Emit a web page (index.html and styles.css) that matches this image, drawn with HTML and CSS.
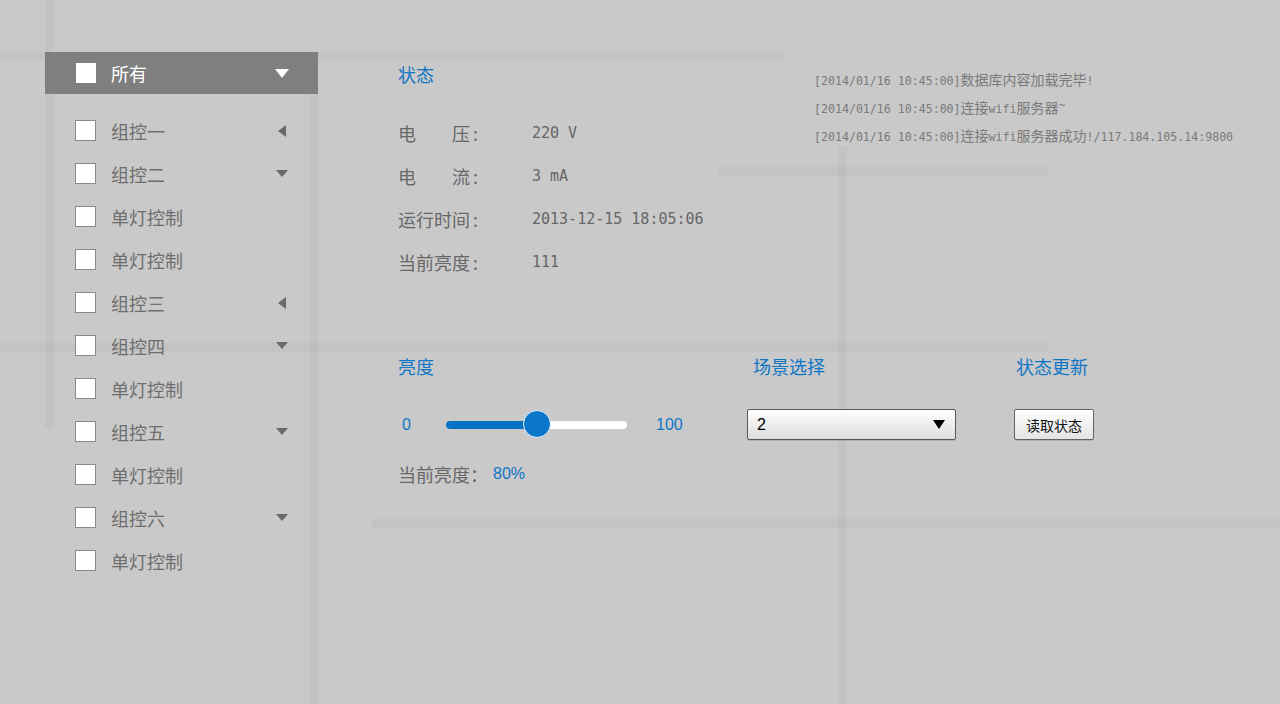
FILE: index.html
```html
<!DOCTYPE html>
<html lang="zh-CN">
<head>
<meta charset="utf-8">
<title>灯光控制</title>
<link rel="stylesheet" href="styles.css">
</head>
<body>
<div class="bg" aria-hidden="true">
  <i class="ln v1"></i>
  <i class="ln h1"></i>
  <i class="ln v2"></i>
  <i class="ln h2"></i>
  <i class="ln v3"></i>
  <i class="ln h3"></i>
  <i class="ln h4"></i>
</div>
<div class="page">
  <aside class="sidebar">
    <div class="side-head">
      <span class="cb-head"></span>
      <span class="label">所有</span>
      <span class="tri-slot"><span class="tri-down tri-white"></span></span>
    </div>
    <ul class="tree">
      <li class="node"><span class="cb"></span><span class="label">组控一</span><span class="tri-slot"><span class="tri-left"></span></span></li>
      <li class="node"><span class="cb"></span><span class="label">组控二</span><span class="tri-slot"><span class="tri-down"></span></span></li>
      <li class="node"><span class="cb"></span><span class="label">单灯控制</span></li>
      <li class="node"><span class="cb"></span><span class="label">单灯控制</span></li>
      <li class="node"><span class="cb"></span><span class="label">组控三</span><span class="tri-slot"><span class="tri-left"></span></span></li>
      <li class="node"><span class="cb"></span><span class="label">组控四</span><span class="tri-slot"><span class="tri-down"></span></span></li>
      <li class="node"><span class="cb"></span><span class="label">单灯控制</span></li>
      <li class="node"><span class="cb"></span><span class="label">组控五</span><span class="tri-slot"><span class="tri-down"></span></span></li>
      <li class="node"><span class="cb"></span><span class="label">单灯控制</span></li>
      <li class="node"><span class="cb"></span><span class="label">组控六</span><span class="tri-slot"><span class="tri-down"></span></span></li>
      <li class="node"><span class="cb"></span><span class="label">单灯控制</span></li>
    </ul>
  </aside>
  <main class="main">
    <div class="top">
      <section class="status">
        <h2 class="title">状态</h2>
        <dl class="kv">
          <div class="kv-row"><dt>电　　压<span class="colon">:</span></dt><dd>220 V</dd></div>
          <div class="kv-row"><dt>电　　流<span class="colon">:</span></dt><dd>3 mA</dd></div>
          <div class="kv-row"><dt>运行时间<span class="colon">:</span></dt><dd>2013-12-15 18:05:06</dd></div>
          <div class="kv-row"><dt>当前亮度<span class="colon">:</span></dt><dd>111</dd></div>
        </dl>
      </section>
      <div class="log">
        <p><span class="m">[2014/01/16 10:45:00]</span>数据库内容加载完毕<span class="m">!</span></p>
        <p><span class="m">[2014/01/16 10:45:00]</span>连接<span class="m">wifi</span>服务器<span class="m tilde">~</span></p>
        <p><span class="m">[2014/01/16 10:45:00]</span>连接<span class="m">wifi</span>服务器成功<span class="m">!/117.184.105.14:9800</span></p>
      </div>
    </div>
    <div class="controls">
      <h2 class="title">亮度</h2>
      <h2 class="title t2">场景选择</h2>
      <h2 class="title t3">状态更新</h2>
      <div class="slider cell">
        <span class="rmin">0</span>
        <div class="track">
          <div class="fill" style="width:50%"></div>
          <span class="thumb" style="left:50%"></span>
        </div>
        <span class="rmax">100</span>
      </div>
      <div class="select cell">
        <span class="sel-val">2</span>
        <span class="sel-arrow"></span>
      </div>
      <div class="cell"><button class="btn" type="button">读取状态</button></div>
      <div class="cur"><span class="cur-label">当前亮度：</span><span class="cur-val">80%</span></div>
    </div>
  </main>
</div>
</body>
</html>
```

FILE: styles.css
```css
* { box-sizing: border-box; }
html, body { margin: 0; padding: 0; }
body {
  width: 1280px;
  height: 704px;
  overflow: hidden;
  position: relative;
  background: #c9c9c9;
  font-family: "Noto Sans CJK SC", "Noto Sans", sans-serif;
  color: #6b6b6b;
}

/* faint decorative grid lines */
.bg { position: absolute; inset: 0; z-index: 0; }
.ln { position: absolute; display: block; background: rgba(0, 0, 0, 0.028); }
.v1 { left: 45px; top: 0; width: 9px; height: 428px; }
.h1 { left: 0; top: 52px; width: 785px; height: 9px; }
.v2 { left: 309px; top: 94px; width: 9px; height: 610px; }
.h2 { left: 0; top: 343px; width: 1048px; height: 9px; }
.v3 { left: 838px; top: 146px; width: 9px; height: 558px; }
.h3 { left: 718px; top: 167px; width: 330px; height: 9px; }
.h4 { left: 372px; top: 519px; width: 908px; height: 9px; }

.page { position: relative; z-index: 1; display: flex; height: 100%; }

/* sidebar */
.sidebar { flex: none; width: 273px; margin-left: 45px; margin-top: 52px; }
.side-head {
  height: 42px;
  background: #7f7f7f;
  display: flex;
  align-items: center;
  padding-left: 31px;
  color: #fff;
}
.cb-head { flex: none; width: 20px; height: 20px; background: #fff; }
.label { font-size: 18px; line-height: 24px; margin-left: 15px; white-space: nowrap; }
.tri-slot {
  margin-left: auto;
  margin-right: 30px;
  width: 13px;
  height: 12px;
  display: flex;
  align-items: center;
  justify-content: center;
}
.tri-down {
  width: 0; height: 0;
  border-left: 6.5px solid transparent;
  border-right: 6.5px solid transparent;
  border-top: 7px solid #6a6a6a;
}
.tri-white {
  border-left-width: 7px;
  border-right-width: 7px;
  border-top: 9px solid #fff;
}
.tri-left {
  width: 0; height: 0;
  border-top: 6px solid transparent;
  border-bottom: 6px solid transparent;
  border-right: 8px solid #6a6a6a;
}
.tree { list-style: none; margin: 15px 0 0; padding: 0; }
.node {
  height: 43px;
  display: flex;
  align-items: center;
  padding-left: 30px;
  color: #6e6e6e;
}
.cb { flex: none; width: 21px; height: 21px; background: #fff; border: 1px solid #8a8a8a; }

/* main */
.main { flex: 1; padding-left: 80px; display: flex; flex-direction: column; }
.top { display: flex; }
.status { flex: none; width: 416px; padding-top: 62px; }
.title {
  margin: 0;
  font-size: 18px;
  line-height: 24px;
  font-weight: normal;
  color: #0f76c6;
  white-space: nowrap;
}
.kv { margin: 25px 0 0; }
.kv-row { display: flex; align-items: center; height: 43px; }
.kv dt { width: 134px; font-size: 18px; line-height: 24px; color: #676767; white-space: nowrap; }
.colon { margin-left: 3px; }
.kv dd {
  margin: 0;
  font-family: "DejaVu Sans Mono", "Liberation Mono", monospace;
  font-size: 15px;
  color: #666;
  white-space: nowrap;
}

.log { padding-top: 65px; color: #7a7a7a; }
.log p { margin: 0; height: 28px; line-height: 28px; font-size: 14px; white-space: nowrap; }
.m { font-family: "DejaVu Sans Mono", "Liberation Mono", monospace; font-size: 11.6px; line-height: 1; }
.tilde { vertical-align: 4px; }

/* controls */
.controls {
  margin-top: 71px;
  display: grid;
  grid-template-columns: 349px 267px 1fr;
}
.t2 { padding-left: 6px; }
.t3 { padding-left: 2px; }
.cell { margin-top: 31px; height: 31px; }

.slider {
  display: flex;
  align-items: center;
  font-family: "Liberation Sans", Arial, sans-serif;
  font-size: 16px;
  color: #0f76c6;
}
.rmin { width: 48px; padding-left: 4px; }
.track { position: relative; width: 181px; height: 8px; border-radius: 4px; background: #fff; }
.fill { height: 100%; background: #0571c3; border-radius: 4px 0 0 4px; }
.thumb {
  position: absolute;
  top: 50%;
  width: 28px;
  height: 28px;
  margin: -14.5px 0 0 -14px;
  border-radius: 50%;
  background: #0a77cb;
  border: 1px solid #e9f1f9;
}
.rmax { margin-left: 29px; }

.select {
  width: 209px;
  display: flex;
  align-items: center;
  justify-content: space-between;
  padding: 0 10px 0 9px;
  border: 1px solid #585858;
  border-radius: 2px;
  background: linear-gradient(#ffffff, #dddddd);
  box-shadow: 0 1px 0 rgba(0, 0, 0, 0.12);
  font-family: "Liberation Sans", Arial, sans-serif;
  font-size: 16px;
  color: #000;
}
.sel-arrow {
  width: 0; height: 0;
  border-left: 6.5px solid transparent;
  border-right: 6.5px solid transparent;
  border-top: 9px solid #000;
}
.btn {
  width: 80px;
  height: 31px;
  padding: 0;
  border: 1px solid #626262;
  border-radius: 2px;
  background: linear-gradient(#ffffff, #e4e4e4);
  box-shadow: 0 1px 0 rgba(0, 0, 0, 0.12);
  font-family: "Noto Sans CJK SC", sans-serif;
  font-size: 14px;
  color: #111;
}

.cur { margin-top: 22px; display: flex; align-items: center; height: 24px; white-space: nowrap; }
.cur-label { width: 95px; font-size: 18px; line-height: 24px; color: #676767; }
.cur-val { font-family: "Liberation Sans", Arial, sans-serif; font-size: 16px; color: #0f76c6; }
```
